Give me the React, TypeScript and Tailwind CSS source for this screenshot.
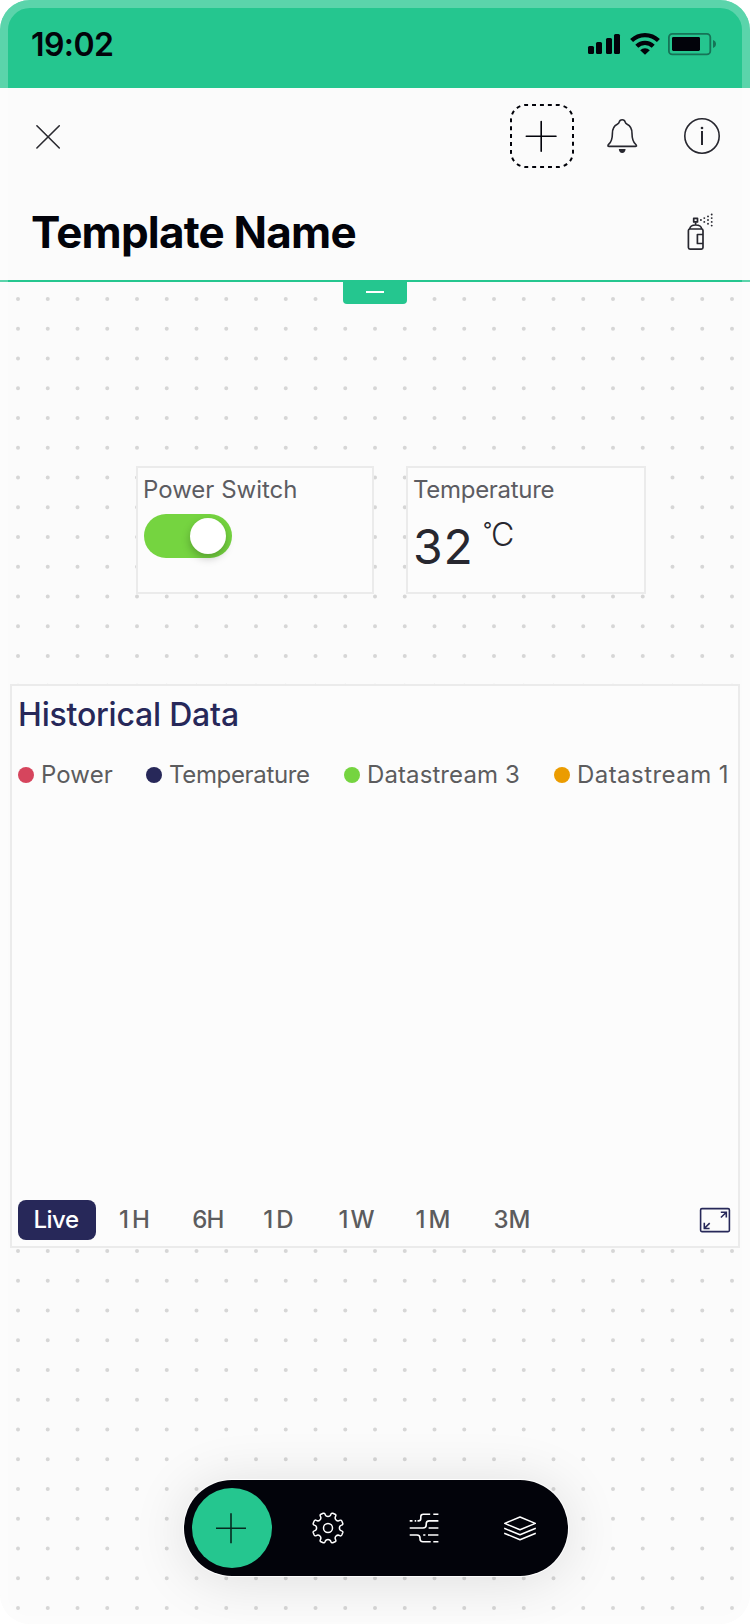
import React from "react";

const STEP = 29.75;
const DOT_ROWS = Array.from({ length: 45 }, (_, i) => 17 + i * STEP);

function DotGrid() {
  return (
    <svg className="absolute inset-0 h-full w-full" viewBox="0 0 750 1342" stroke="#d6d6d6" strokeWidth="4" strokeLinecap="round">
      {DOT_ROWS.map((y) => (
        <line key={y} x1="18" x2="733" y1={y} y2={y} strokeDasharray="0 29.75" />
      ))}
    </svg>
  );
}

function StatusIcons() {
  return (
    <svg className="h-6 w-[130px]" viewBox="587 32 130 24" fill="#02030a">
      <rect x="588" y="46" width="6" height="8" rx="1.5" />
      <rect x="596" y="42" width="6" height="12" rx="1.5" />
      <rect x="606" y="38" width="6" height="16" rx="1.5" />
      <rect x="614" y="34" width="6" height="20" rx="1.5" />
      <g fill="none" stroke="#02030a" strokeWidth="4.2">
        <path d="M631.6 40.6a19 19 0 0 1 26.8 0" />
        <path d="M636.8 46.2a11.6 11.6 0 0 1 16.4 0" />
      </g>
      <path d="M645 54.8l-4.8-4.6a6.8 6.8 0 0 1 9.6 0z" />
      <rect x="668.9" y="33.9" width="41.4" height="20.4" rx="3.4" fill="none" stroke="#02030a" strokeOpacity=".42" strokeWidth="1.8" />
      <rect x="672" y="37" width="28" height="14" rx="1.4" />
      <path d="M713 40c1.8.7 3 2.2 3 4s-1.2 3.3-3 4z" fillOpacity=".42" />
    </svg>
  );
}

function CloseIcon() {
  return (
    <svg className="size-8" viewBox="32 120 32 32" fill="none" stroke="#2a2a30" strokeWidth="1.6" strokeLinecap="round">
      <path d="M36.9 125.8l22.4 22.2M59.3 125.8l-22.4 22.2" />
    </svg>
  );
}

function AddWidgetIcon() {
  return (
    <svg className="size-16" viewBox="510 104 64 64" fill="none" stroke="#02030a">
      <rect x="511" y="105" width="62" height="62" rx="15" strokeWidth="2" pathLength="224" strokeDasharray="4 4" strokeDashoffset="-6.1" />
      <path d="M526.3 136.3h29.7M541.2 121.5v29.7" strokeWidth="1.6" strokeLinecap="round" />
    </svg>
  );
}

function BellIcon() {
  return (
    <svg className="ml-[30px] h-10 w-9" viewBox="604 116 36 40" fill="none" stroke="#27272f" strokeWidth="1.6" strokeLinejoin="round">
      <path d="M622.2 119.7c-1.7 0-2.7 1-3 2.5-.2 1-.8 1.500-1.900 2-3.600 1.700-4.900 4.800-4.900 9.200 0 5.500-1 8.300-3.600 10.800-1 1-1.300 2.200.1 2.200h26.600c1.400 0 1.100-1.200.1-2.200-2.600-2.500-3.600-5.300-3.600-10.800 0-4.400-1.300-7.500-4.900-9.200-1.100-.5-1.700-1-1.900-2-.3-1.500-1.300-2.500-3-2.500z" />
      <path d="M618.8 149h6.8c-.2 2.600-1.500 4-3.400 4s-3.200-1.400-3.400-4z" fill="#27272f" stroke="none" />
    </svg>
  );
}

function InfoIcon() {
  return (
    <svg className="ml-11 size-9" viewBox="684 118 36 36" fill="none" stroke="#27272f">
      <circle cx="702" cy="136" r="17.2" strokeWidth="1.6" />
      <path d="M702 131v14" strokeWidth="2" />
      <circle cx="702" cy="128" r="1.3" fill="#27272f" stroke="none" />
    </svg>
  );
}

const SPRAY: [number, number][] = [
  [700.9, 220], [704.3, 218.1], [704.3, 221.9], [708, 216.4], [708, 220], [708, 223.7],
  [711.7, 214.5], [711.7, 218.1], [711.7, 221.9], [711.7, 225.6],
];

function SprayIcon() {
  return (
    <svg className="h-10 w-8" viewBox="684 212 32 40" fill="none" stroke="#27272f" strokeWidth="1.7" strokeLinejoin="round">
      <rect x="688.4" y="229" width="14.6" height="20.1" rx="1.6" />
      <path d="M689.7 229c.3-2.6 2.6-4 6-4s5.700 1.400 6 4M695.600 222.300v2.700M703 234.500h-5.600v9h5.600" />
      <rect x="693.7" y="218.300" width="3.8" height="3.6" />
      {SPRAY.map(([x, y]) => (
        <circle key={`${x}-${y}`} cx={x} cy={y} r=".95" fill="#27272f" stroke="none" />
      ))}
    </svg>
  );
}

function PlusIcon() {
  return (
    <svg className="mr-0.5 size-8" viewBox="215 1512 32 32" stroke="#062a20" strokeWidth="1.6">
      <path d="M216 1528.3h30M231 1513.3v30" />
    </svg>
  );
}

const polar = (r: number, deg: number) => {
  const a = (deg * Math.PI) / 180;
  return `${(r * Math.sin(a)).toFixed(2)} ${(-r * Math.cos(a)).toFixed(2)}`;
};

const GEAR =
  "M" + polar(13.9, -12) +
  Array.from({ length: 8 }, (_, i) => {
    const a = i * 45;
    return `A3 3 0 0 0 ${polar(13.9, a + 12)}Q${polar(15.6, a + 12.5)} ${polar(15.5, a + 18)}L${polar(15.5, a + 27)}Q${polar(15.6, a + 32.5)} ${polar(13.9, a + 33)}`;
  }).join("") + "Z";

function GearIcon() {
  return (
    <svg className="size-8" viewBox="-16 -16 32 32" fill="none" stroke="white" strokeWidth="1.5" strokeLinejoin="round">
      <path d={GEAR} />
      <circle r="4.5" />
    </svg>
  );
}

function StreamsIcon() {
  return (
    <svg className="size-8" viewBox="408 1511.5 32 32" fill="none" stroke="white" strokeWidth="1.6">
      <path d="M409.7 1520.4h2.8M414.7 1520.4h1.5M417.5 1520.4h.8c1.7 0 2.500-.8 2.500-2.500v-1.700c0-1.600.9-2.500 2.500-2.500h6.900M433.300 1513.700h5.100" />
      <path d="M409.7 1527.5h13.3c2 0 3.2-1 3.2-3v-1.100c0-2 1-3 3-3h9.200M428.600 1527.500h9.800" />
      <path d="M409.7 1534.5h7.3c2 0 3 1 3 3v.7c0 2 1 3 3 3h7.700M433.300 1541.200h5.100M423.200 1534.500h2.200M428 1534.500h10.400" />
    </svg>
  );
}

function LayersIcon() {
  return (
    <svg className="h-[30px] w-[34px]" viewBox="503 1513 34 30" fill="none" stroke="white" strokeWidth="1.5" strokeLinejoin="round">
      <path d="M520 1517l15.3 6.4-15.3 6.4-15.3-6.4z" />
      <path d="M504.2 1528.3l15.8 6.5 15.8-6.5M504.2 1533.2l15.8 6.5 15.8-6.5" />
    </svg>
  );
}

function FullscreenIcon() {
  return (
    <svg className="mr-px h-[26px] w-8" viewBox="699.2 1207.2 32 26" fill="none" stroke="#272859" strokeWidth="1.6">
      <rect x="700.8" y="1208.8" width="28.8" height="23" rx="1.3" />
      <path d="M721 1212.5h5.5v5.3M726.3 1212.7l-5.2 5M704.5 1223v5.7h5.3M704.7 1228.5l5.2-5.2" />
    </svg>
  );
}

const LEGEND = [
  { label: "Power", dot: "bg-[#d6455d]", text: "w-[72px] tracking-[0.1px]" },
  { label: "Temperature", dot: "bg-[#272859]", text: "w-[142px] tracking-[-0.34px]" },
  { label: "Datastream 3", dot: "bg-[#75d440]", text: "w-[154px] tracking-[0.1px]" },
  { label: "Datastream 1", dot: "bg-[#eb9c00]", text: "w-[154px] tracking-[0.45px]" },
];

const RANGES = [
  { label: "1H", cls: "w-[74px] tracking-[3px]" },
  { label: "6H", cls: "w-[70px] tracking-[-0.8px]" },
  { label: "1D", cls: "w-[74px] tracking-[3px]" },
  { label: "1W", cls: "w-[81px] tracking-[2px]" },
  { label: "1M", cls: "w-[73px] tracking-[3px]" },
  { label: "3M", cls: "w-[82px]" },
];

export default function App() {
  return (
    <div className="relative flex h-[1624px] w-[750px] flex-col overflow-hidden rounded-[30px] bg-[#fbfbfb] font-['Inter',sans-serif]">
      <div className="flex h-[88px] shrink-0 items-center justify-between bg-[#25c68f] pr-[33px] pl-[31px]">
        <span className="pt-px text-[32px] font-semibold tracking-[-0.6px] text-[#02030a]">19:02</span>
        <StatusIcons />
      </div>

      <header className="shrink-0 border-b-2 border-[#25c68f]">
        <div className="flex h-24 items-center pr-[30px] pl-8">
          <CloseIcon />
          <div className="ml-auto flex items-center">
            <AddWidgetIcon />
            <BellIcon />
            <InfoIcon />
          </div>
        </div>
        <div className="flex h-24 items-center justify-between pr-[34px] pl-[31px]">
          <h1 className="text-[44px] font-bold tracking-[-0.8px] text-[#02030a]">Template Name</h1>
          <SprayIcon />
        </div>
      </header>

      <main className="relative flex flex-1 flex-col">
        <DotGrid />
        <div className="relative flex h-[22px] w-16 items-center justify-center self-center rounded-b bg-[#25c68f] pb-[3px]">
          <div className="h-0.5 w-[18px] bg-white" />
        </div>

        <div className="relative mt-[162px] ml-[136px] flex h-32 gap-8">
          <section className="w-[238px] border-2 border-[#ebebeb] bg-[#fcfcfc] pt-1.5 pl-1.5">
            <h2 className="-ml-px text-2xl leading-8 text-[#5c5c62]">Power Switch</h2>
            <div className="mt-2 flex h-11 w-[88px] items-center justify-end rounded-full bg-[#75d440] pr-1.5">
              <div className="size-9 rounded-full bg-white shadow-[0_4px_8px_rgba(0,0,0,0.25)]" />
            </div>
          </section>
          <section className="w-[240px] border-2 border-[#ebebeb] bg-[#fcfcfc] pt-1.5 pl-[5px]">
            <h2 className="text-2xl leading-8 tracking-[-0.3px] text-[#5c5c62]">Temperature</h2>
            <div className="flex text-[#27272f]">
              <span className="mt-[17px] w-[70px] text-5xl leading-[48px] tracking-[0.8px]">32</span>
              <span className="mt-2 w-2 text-[20px] leading-8">°</span>
              <span className="mt-[13px] text-[32px] leading-8 font-light">C</span>
            </div>
          </section>
        </div>

        <section className="relative mx-2.5 mt-[90px] flex h-[564px] flex-col border-2 border-[#ebebeb] bg-[#fcfcfc] px-1.5">
          <h2 className="mt-[9px] text-[32px] leading-10 font-medium tracking-[-0.2px] text-[#272859]">Historical Data</h2>
          <div className="mt-[23px] flex gap-8">
            {LEGEND.map((item) => (
              <div key={item.label} className="flex h-[34px] items-center">
                <span className={`mr-[7px] size-4 rounded-full ${item.dot}`} />
                <span className={`-mr-px box-content pr-0.5 text-2xl whitespace-nowrap text-[#5c5c5e] ${item.text}`}>{item.label}</span>
              </div>
            ))}
          </div>
          <div className="mt-auto mb-1.5 flex h-10 items-center text-2xl font-medium text-[#5c5c5e]">
            <div className="mr-[3px] flex h-10 w-[78px] items-center justify-center rounded-lg bg-[#272859] pr-0.5 tracking-[-0.5px] text-white">Live</div>
            {RANGES.map((r) => (
              <div key={r.label} className={`text-center ${r.cls}`}>{r.label}</div>
            ))}
            <div className="ml-auto">
              <FullscreenIcon />
            </div>
          </div>
        </section>

        <nav className="relative mt-auto mb-12 ml-[184px] flex h-24 w-[384px] items-center rounded-full bg-[#02030a] pl-2 shadow-[0_0_0_1px_rgba(255,255,255,0.9),0_4px_56px_rgba(0,0,0,0.12)]">
          <div className="flex size-20 items-center justify-center rounded-full bg-[#25c68f]">
            <PlusIcon />
          </div>
          <div className="ml-10 flex items-center">
            <GearIcon />
            <div className="ml-16">
              <StreamsIcon />
            </div>
            <div className="ml-[63px]">
              <LayersIcon />
            </div>
          </div>
        </nav>
      </main>

      <div className="pointer-events-none absolute inset-0 rounded-[30px] border-8 border-white/25" />
    </div>
  );
}
